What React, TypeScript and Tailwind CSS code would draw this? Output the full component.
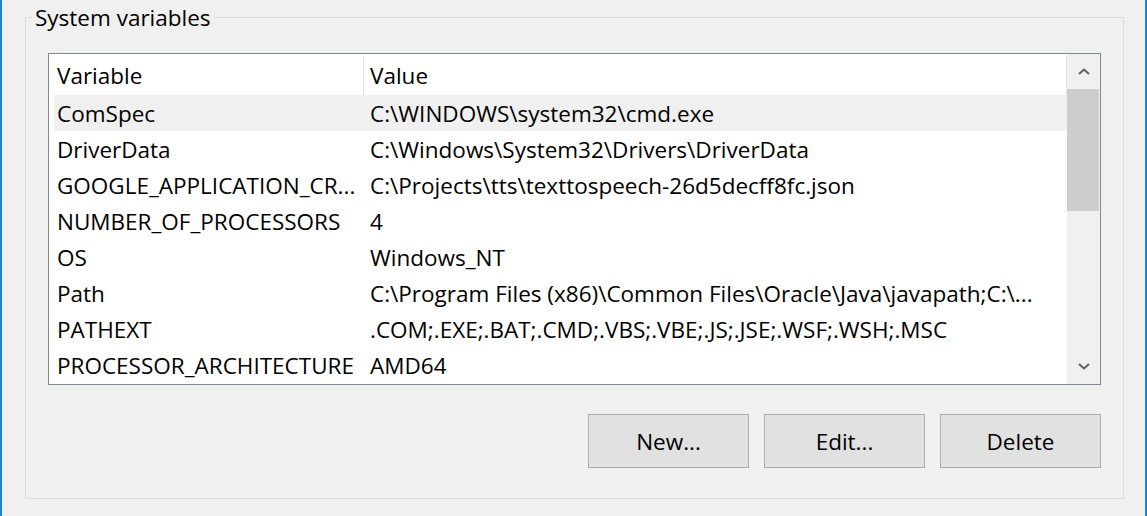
const rows: [string, string][] = [
  ['ComSpec', 'C:\\WINDOWS\\system32\\cmd.exe'],
  ['DriverData', 'C:\\Windows\\System32\\Drivers\\DriverData'],
  ['GOOGLE_APPLICATION_CR...', 'C:\\Projects\\tts\\texttospeech-26d5decff8fc.json'],
  ['NUMBER_OF_PROCESSORS', '4'],
  ['OS', 'Windows_NT'],
  ['Path', 'C:\\Program Files (x86)\\Common Files\\Oracle\\Java\\javapath;C:\\...'],
  ['PATHEXT', '.COM;.EXE;.BAT;.CMD;.VBS;.VBE;.JS;.JSE;.WSF;.WSH;.MSC'],
  ['PROCESSOR_ARCHITECTURE', 'AMD64'],
];

function Chevron({ up }: { up?: boolean }) {
  return (
    <svg width="12" height="7" viewBox="0 0 12 7" className="text-[#606060]">
      <path
        d={up ? 'M1 6 L6 1.5 L11 6' : 'M1 1 L6 5.5 L11 1'}
        fill="none"
        stroke="currentColor"
        strokeWidth="2"
      />
    </svg>
  );
}

export default function App() {
  return (
    <div
      className="w-[1147px] h-[516px] bg-[#f0f0f0] border-l-2 border-r-2 border-[#1a83dc] overflow-hidden text-black"
      style={{ fontFamily: '"Open Sans", "Liberation Sans", sans-serif' }}
    >
      <fieldset className="ml-[23px] mt-[4px] w-[1099px] h-[495px] border border-[#dcdcdc] px-[22px] pb-[31px]">
        <legend className="-ml-[16px] px-[3px] text-[22.5px] leading-[26px] pt-[1px]">System variables</legend>

        <div className="mt-[22px] h-[332px] border border-[#828790] bg-white flex">
          <div className="flex-1 pl-[5px] text-[22.5px]">
            <div className="h-[41px] flex items-center pt-[2px]">
              <div className="w-[310px] h-full pl-[3px] flex items-center border-r border-[#e5e5e5]">Variable</div>
              <div className="flex-1 h-full pl-[6px] flex items-center border-r border-[#e5e5e5]">Value</div>
            </div>
            {rows.map(([name, value], i) => (
              <div
                key={name}
                className={`h-[36px] flex items-center whitespace-nowrap pt-[2px] ${i === 0 ? 'bg-[#f0f0f0]' : ''}`}
              >
                <div className="w-[310px] pl-[3px] overflow-hidden">{name}</div>
                <div className="flex-1 pl-[6px] overflow-hidden">{value}</div>
              </div>
            ))}
          </div>

          <div className="w-[33px] bg-[#f0f0f0] flex flex-col">
            <div className="h-[35px] flex items-center justify-center">
              <Chevron up />
            </div>
            <div className="h-[122px] w-[32px] bg-[#cdcdcd]" />
            <div className="flex-1" />
            <div className="h-[35px] flex items-center justify-center">
              <Chevron />
            </div>
          </div>
        </div>

        <div className="mt-[29px] flex justify-end gap-[15px] text-[22.5px]">
          {['New...', 'Edit...', 'Delete'].map((label) => (
            <button
              key={label}
              className="w-[161px] h-[54px] bg-[#e1e1e1] border border-[#adadad] flex items-center justify-center pt-[2px]"
            >
              {label}
            </button>
          ))}
        </div>
      </fieldset>
    </div>
  );
}
